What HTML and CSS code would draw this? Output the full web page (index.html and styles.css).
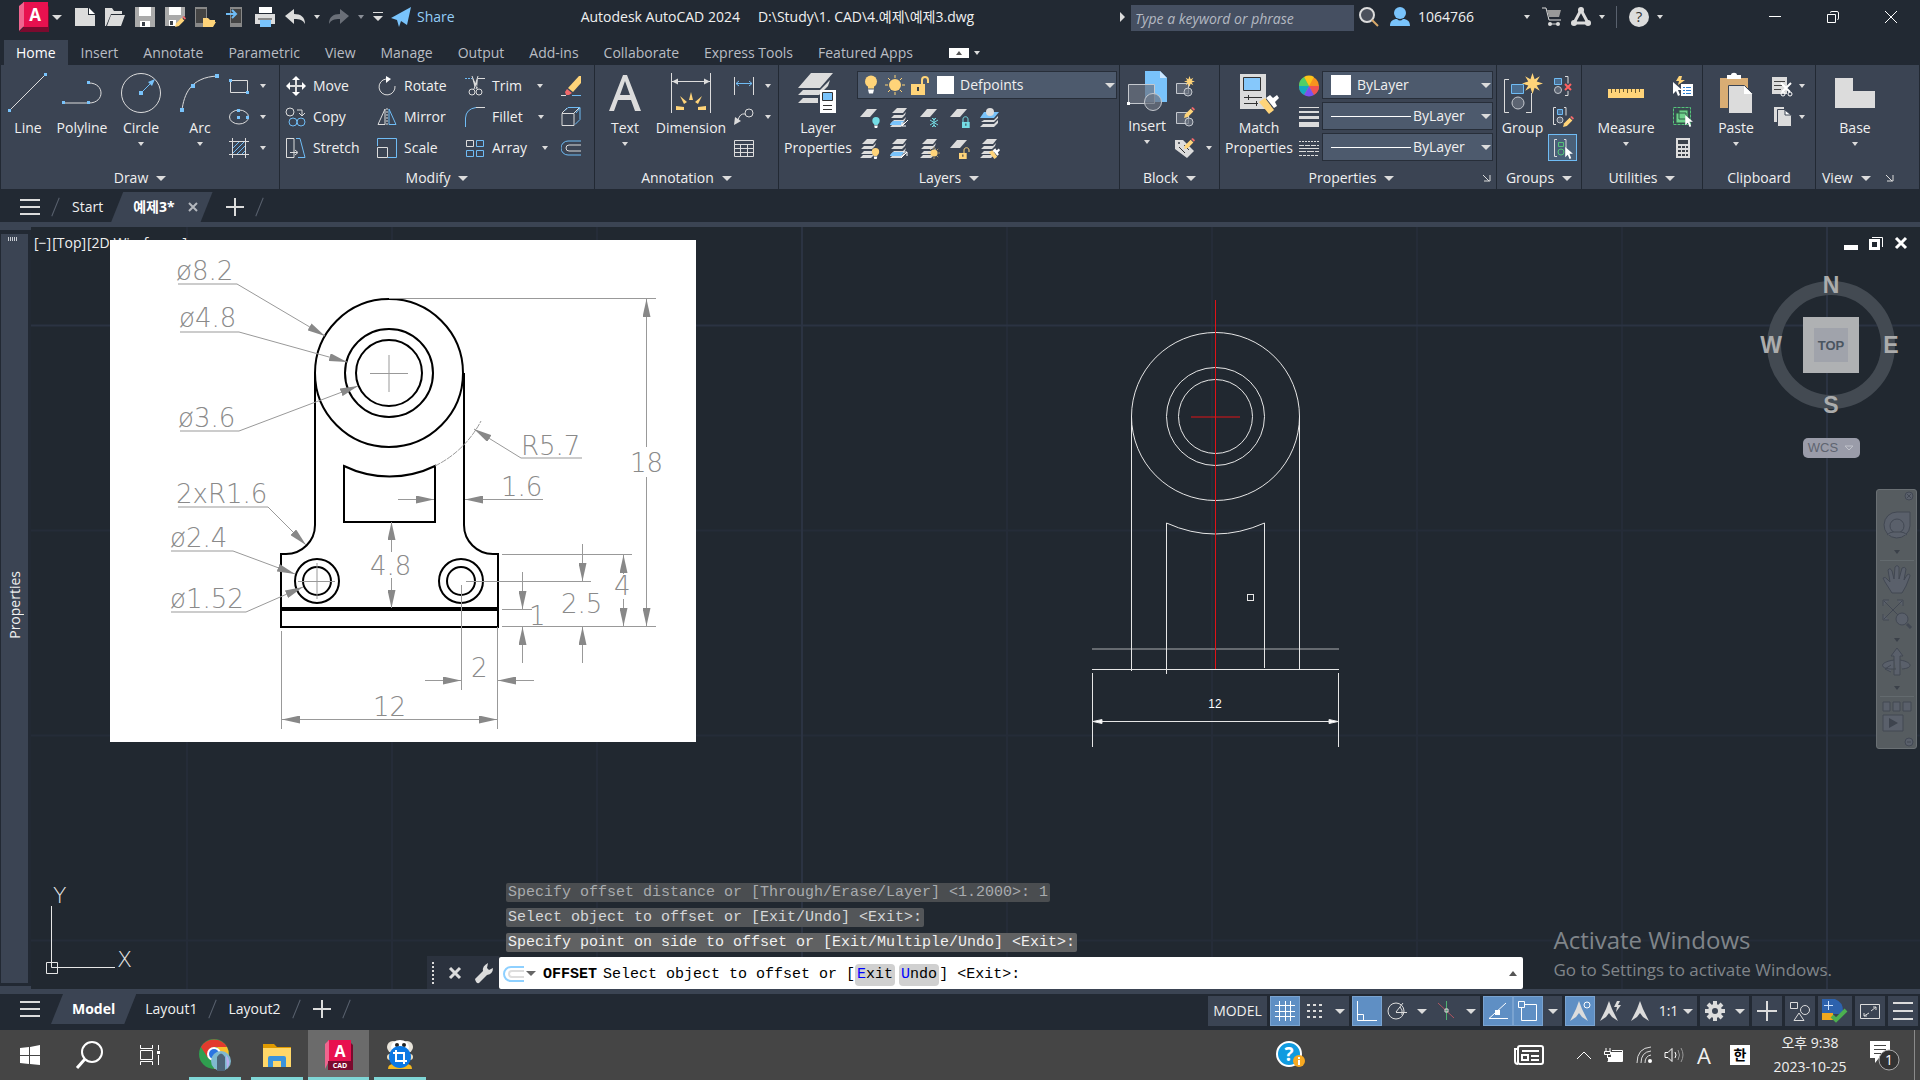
FILE: index.html
```html
<!DOCTYPE html>
<html lang="en">
<head>
    <meta charset="UTF-8">
    <meta name="viewport" content="width=device-width, initial-scale=1.0">
    <title>Autodesk AutoCAD 2024</title>
    <link rel="stylesheet" href="styles.css">
</head>
<body>
    <!-- shared icon parts -->
    <svg class="defs" aria-hidden="true">
        <symbol id="sheet" viewBox="0 0 20 20"><path class="f" d="M7 1h10l-7 8H0z"/></symbol>
        <symbol id="stack" viewBox="0 0 20 20">
            <path class="f" d="M7 0h10l-4 5H2z"/>
            <path class="f" d="M1 10l3-3h9l3-3-1 3-3 3zM1 15l3-3h9l3-3-1 3-3 3zM0 19l3-3h9l3-3-1 3-3 3z"/>
        </symbol>
        <symbol id="pencil" viewBox="0 0 20 20"><path class="f-yellow" d="M0 20l2-7L12 3l5 5L7 18z"/><path class="f-red" d="M13 2l3-2 4 4-2 3z"/></symbol>
        <symbol id="brush" viewBox="0 0 20 20"><path class="f-yellow" d="M0 8l6-4 9 12-5 4z"/><path class="f-white" d="M7 4l4-3 3 3 4-3 2 3-4 4 2 4-3 2z"/></symbol>
        <symbol id="bulb" viewBox="0 0 12 18"><circle cx="6" cy="6" r="6"/><path d="M3 10h6v3H3z"/><path class="f-white" d="M3 14h6l-1 4H4z"/></symbol>
        <symbol id="sun" viewBox="0 0 20 20"><circle class="f-yellow" cx="10" cy="10" r="6"/><path class="s-yellow" d="M10 0v3M10 17v3M0 10h3M17 10h3M3 3l2 2M15 15l2 2M3 17l2-2M15 5l2-2"/></symbol>
        <symbol id="lock" viewBox="0 0 20 20"><path d="M0 9h14v11H0z"/><path class="dark" d="M6 12h2v4H6z"/></symbol>
        <symbol id="pointer" viewBox="0 0 10 14"><path class="f-white" d="M0 0v12l3-3 2 5 2-1-2-5h4z"/></symbol>
        <symbol id="burst" viewBox="0 0 20 20"><path class="f-yellow" d="M10 0l2 6 5-3-3 5 6 2-6 2 3 5-5-3-2 6-2-6-5 3 3-5-6-2 6-2-3-5 5 3z"/></symbol>
        <symbol id="compass" viewBox="0 0 20 20"><path class="f" d="M10 0l3 8 6 12-6-4-3-4-3 4-6 4 6-12z"/></symbol>
        <symbol id="offset" viewBox="0 0 20 20"><path class="s-blue" d="M20 3H7a7 7 0 0 0 0 14h13"/><path class="s" d="M20 7H8a3 3 0 0 0 0 6h12"/></symbol>
    </svg>

    <header class="titlebar">
        <div class="quick">
            <button class="logo" aria-label="Application menu"><svg width="30" height="30" viewBox="0 0 30 30"><path fill="#e8114f" d="M4 0h25v25H4z"/><path fill="#f0658f" d="M0 4l5-4v24l-5 5z"/><path fill="#7b0a2e" d="M5 25h24V4l1 1v25H0z"/><text class="logo-a" x="16" y="19">A</text></svg></button>
            <i class="caret wide"></i>
            <button class="qbtn first" aria-label="New"><svg class="ico"><path class="f" d="M0 1h13v7h7v11H0z"/><path class="f-white" d="M14 1l6 6h-6z"/></svg></button>
            <button class="qbtn" aria-label="Open"><svg class="ico"><path class="f" d="M0 1h7l2 3h8v3H6L1 19H0zM6 8h14l-4 11H2z"/></svg></button>
            <button class="qbtn" aria-label="Save"><svg class="ico"><path fill="#aaa" d="M0 0h20v20H0z"/><path class="f-white" d="M4 0h12v9H4zM5 14h10v6H5z"/><path class="dark" d="M7 15h3v4H7z"/></svg></button>
            <button class="qbtn" aria-label="Save as"><svg class="ico"><path fill="#aaa" d="M0 0h20v9l-9 10H0z"/><path class="f-white" d="M4 0h12v8H4zM4 13h7v6H4z"/><path class="dark" d="M5 14h3v4H5z"/><use href="#pencil" x="10" y="9" width="11" height="11"/></svg></button>
            <button class="qbtn" aria-label="Open from web"><svg class="ico"><path fill="#888" d="M0 0h12v20H0z"/><path fill="#444" d="M1 2h10v14H1z"/><path class="f-yellow" d="M8 11h5l2 2h5v2h-8l-2 5H8zM12 15h9l-3 5h-8z"/></svg></button>
            <button class="qbtn" aria-label="Save to web"><svg class="ico"><path fill="#888" d="M5 0h12v20H5z"/><path fill="#444" d="M6 2h10v14H6z"/><path class="s-blue thick" d="M1 7h9M7 3l4 4-4 4"/></svg></button>
            <button class="qbtn" aria-label="Plot"><svg class="ico"><path class="f-white" d="M4 0h13v6H4z"/><path class="f" d="M0 7h20v10H0z"/><path fill="#888" d="M3 11h14v2H3z"/><path class="f-blue" d="M5 13h11v7H5z"/></svg></button>
            <button class="qbtn" aria-label="Undo"><svg class="ico"><path class="f" d="M0 9l9-7v5c7 0 11 3 11 10-2-4-5-5-11-5v5z"/></svg></button>
            <i class="caret"></i>
            <button class="qbtn" aria-label="Redo"><svg class="ico"><path fill="#6a6f78" d="M20 9l-9-7v5C4 7 0 10 0 17c2-4 5-5 11-5v5z"/></svg></button>
            <i class="caret dim"></i>
            <button class="qbtn narrow" aria-label="Customize"><svg width="10" height="10"><path class="f" d="M0 0h10v1H0zM0 4h10L5 9z"/></svg></button>
            <button class="share"><svg class="ico"><path class="f-blue" d="M0 11l20-11-4 18-6-4-2 6-2-7zM7 13l10-9-7 10z"/></svg>Share</button>
        </div>
        <div class="doc-title"><span>Autodesk AutoCAD 2024</span><span>D:\Study\1. CAD\4.예제\예제3.dwg</span></div>
        <div class="account">
            <i class="caret right"></i>
            <input class="search" type="text" placeholder="Type a keyword or phrase" aria-label="Search">
            <button class="abtn" aria-label="Search help"><svg class="ico"><circle cx="8" cy="8" r="7" fill="#4b505b" stroke="#dcdcdc" stroke-width="2"/><path stroke="#d9a96b" stroke-width="2" d="M13 13l6 6"/></svg></button>
            <button class="user"><svg class="ico"><circle class="f-blue" cx="10" cy="6" r="6"/><path class="f-blue" d="M0 19c0-5 3-7 7-7 2 2 4 2 6 0 4 0 7 2 7 7z"/></svg>1064766<i class="caret"></i></button>
            <button class="abtn" aria-label="Store"><svg class="ico"><path class="s" d="M0 1h4l3 12h12M7 17h10"/><path fill="#999" d="M5 3h14l-2 7H7z"/><circle class="f" cx="8" cy="17" r="2"/><circle class="f" cx="16" cy="17" r="2"/></svg></button>
            <button class="abtn" aria-label="Autodesk app store"><svg class="ico"><path class="s fat" d="M10 3L3 16h14z"/><circle class="f" cx="10" cy="3" r="3"/><circle class="f" cx="3" cy="16" r="3"/><circle class="f" cx="17" cy="16" r="3"/></svg></button>
            <i class="caret"></i>
            <i class="vsep"></i>
            <button class="abtn" aria-label="Help"><svg class="ico"><circle class="f" cx="10" cy="10" r="10"/><text class="help-q" x="10" y="15">?</text></svg></button>
            <i class="caret"></i>
            <div class="winbtns">
                <button aria-label="Minimize"><svg width="14" height="14"><path class="s-white" d="M1 6.500h12"/></svg></button>
                <button aria-label="Restore"><svg width="14" height="14"><path class="s-white" d="M1.500 4.500h8v8h-8zM4 2.500q1-1 2-1h5q1.500 0 1.500 1.500v5q0 1-1 2"/></svg></button>
                <button aria-label="Close"><svg width="14" height="14"><path class="s-white" d="M1 1l12 12M13 1L1 13"/></svg></button>
            </div>
        </div>
    </header>

    <nav class="menu">
        <a class="active" href="#">Home</a>
        <a href="#">Insert</a>
        <a href="#">Annotate</a>
        <a href="#">Parametric</a>
        <a href="#">View</a>
        <a href="#">Manage</a>
        <a href="#">Output</a>
        <a href="#">Add-ins</a>
        <a href="#">Collaborate</a>
        <a href="#">Express Tools</a>
        <a href="#">Featured Apps</a>
        <button class="collapse" aria-label="Minimize ribbon"><svg width="20" height="10"><path class="f-white" d="M0 0h20v10H0z"/><path fill="#555" d="M7 7h6l-3-4z"/></svg><i class="caret"></i></button>
    </nav>

    <main class="ribbon">
        <section class="panel draw">
            <div class="tools">
                <button class="big"><svg class="bico"><path class="s" d="M1 38L38 1"/><path class="f-blue" d="M0 36h3v3H0zM36 0h3v3h-3z"/></svg>Line</button>
                <button class="big"><svg class="bico"><path class="s" d="M1 30h26M27 10c16 0 16 20 0 20"/><path class="f-blue" d="M0 28h3v3H0zM25 28h3v3h-3zM25 8h3v3h-3z"/></svg>Polyline</button>
                <button class="big"><svg class="bico"><circle class="s" cx="20" cy="20" r="19.500"/><path class="s-blue" d="M20 20L32 8"/><path class="f-blue" d="M18 18h4v4h-4zM34 6l-7 3 4 4z"/></svg>Circle<i class="caret"></i></button>
                <button class="big"><svg class="bico"><path class="s" d="M2 37C4 22 10 4 38 3"/><path class="f-blue" d="M0 35h4v4H0zM11 11h4v4h-4zM35 1h4v4h-4z"/></svg>Arc<i class="caret"></i></button>
                <div class="rows">
                    <button aria-label="Rectangle"><svg class="ico"><path class="s" d="M1.500 4.500h17v12h-17z"/><path class="f-blue" d="M0 3h3v3H0zM17 15h3v3h-3z"/></svg><i class="caret"></i></button>
                    <button aria-label="Ellipse"><svg class="ico"><ellipse class="s" cx="10" cy="10" rx="9.500" ry="7"/><path class="f-blue" d="M8 2h3v3H8zM8 9h3v3H8zM17 9h3v3h-3z"/></svg><i class="caret"></i></button>
                    <button aria-label="Hatch"><svg class="ico"><path class="s" d="M3.500 0v20M16.500 0v20M0 3.500h20M0 16.500h20"/><path class="s-blue" d="M4 10l6-6M4 15L15 4M8 16l8-8M13 16l3-3"/></svg><i class="caret"></i></button>
                </div>
            </div>
            <button class="panel-title">Draw<i class="caret wide"></i></button>
        </section>

        <section class="panel modify">
            <div class="tools">
                <div class="rows">
                    <button><svg class="ico"><path class="s thick" d="M10 2v16M2 10h16"/><path class="f-white" d="M10 0l4 4H6zM10 20l4-4H6zM0 10l4-4v8zM20 10l-4-4v8z"/></svg>Move</button>
                    <button><svg class="ico"><circle class="s" cx="4" cy="5" r="4"/><circle class="s-blue" cx="7" cy="15" r="4"/><circle class="s-blue" cx="15" cy="15" r="4"/><path class="s" d="M11 3h5v5M13 6l3 3 3-3"/></svg>Copy</button>
                    <button><svg class="ico"><path class="s" d="M.500.500H8v19H.500zM4 14.500h7M9 12l3 2.500L9 17"/><path class="s-blue" d="M10 .500h4l5 19h-7"/></svg>Stretch</button>
                </div>
                <div class="rows mid">
                    <button><svg class="ico"><path class="s" d="M9 3a8 8 0 1 0 9 7"/><path class="f-white" d="M9 0l5 3-5 4z"/></svg>Rotate</button>
                    <button><svg class="ico"><path class="s" d="M8 2v15.500H1z"/><path class="s-blue" d="M12 2v15.500h7z"/><path class="s" d="M10 1v18" stroke-dasharray="2 1"/></svg>Mirror</button>
                    <button><svg class="ico"><path class="s-blue" d="M.500 8V.500h19v19H11"/><path class="s" d="M.500 9.500h10v10H.500z"/></svg>Scale</button>
                </div>
                <div class="rows spread">
                    <button><svg class="ico"><path class="s-blue" d="M0 2.500h7" stroke-dasharray="2 1"/><path class="s" d="M13 2.500h7M7 0l5 13M13 0L9 13"/><path class="f" d="M7 1l6 11-3 1zM13 1L9 12l3 1z"/><circle class="s" cx="7" cy="16" r="3"/><circle class="s" cx="14" cy="16" r="3"/></svg>Trim<i class="caret"></i></button>
                    <button><svg class="ico"><path class="s-blue" d="M.500 20v-9Q1 2 11 .500"/><path class="s" d="M11 .500h9"/></svg>Fillet<i class="caret"></i></button>
                    <button><svg class="ico"><path class="s" d="M1.500 2.500h7v6h-7z"/><path class="s-blue" d="M11.500 2.500h7v6h-7zM1.500 12.500h7v6h-7zM11.500 12.500h7v6h-7z"/></svg>Array<i class="caret"></i></button>
                </div>
                <div class="rows">
                    <button aria-label="Erase"><svg class="ico"><path class="s" d="M0 19.500h5"/><path class="s-blue" d="M11 19.500h9"/><path class="f-yellow" d="M7 12L18 0h2v7l-8 9z"/><path class="f-red" d="M6 13l5 4-3 2H5l-1-3z"/></svg></button>
                    <button aria-label="Explode"><svg class="ico"><path class="s" d="M1 6.500h12v12H1zM1 6l5-5M13 6l5-5"/><path class="s-blue" d="M4 3.500L7 .500h12v12l-5 5M15 6l4-5"/></svg></button>
                    <button aria-label="Offset"><svg class="ico"><use href="#offset"/></svg></button>
                </div>
            </div>
            <button class="panel-title">Modify<i class="caret wide"></i></button>
        </section>

        <section class="panel annotation">
            <div class="tools">
                <button class="big"><svg class="bico"><path class="f" d="M18 2h4l14 36h-6l-4-11H13L9 38H4zM20 8l-5 14h10z"/></svg>Text<i class="caret"></i></button>
                <button class="big"><svg class="bico"><path class="s" d="M.500 0v40M39.500 0v40M1 8.500h38"/><path class="f" d="M1 8.500l6-3v6zM39 8.500l-6-3v6z"/><path class="f-yellow" d="M20 19l2 8h-4zM9 23l7 6-3 2zM31 23l-7 6 3 2zM5 33l8 1v3H5zM35 33l-8 1v3h8z"/></svg>Dimension</button>
                <div class="rows">
                    <button aria-label="Linear"><svg class="ico"><path class="s" d="M.500 1v18M19.500 1v18"/><path class="s-blue" d="M2 7.500h16M5 5L2 7.500 5 10M15 5l3 2.500-3 2.500"/></svg><i class="caret"></i></button>
                    <button aria-label="Leader"><svg class="ico"><circle class="s" cx="15" cy="6" r="4"/><path class="s" d="M11 7Q6 6 4 13"/><path class="f" d="M0 18l1-8 6 4z"/></svg><i class="caret"></i></button>
                    <button aria-label="Table"><svg class="ico"><path class="s" d="M.500 2.500h19v16H.500zM0 6.500h20M0 10.500h20M0 14.500h20M6.500 7v12M13.500 7v12"/></svg></button>
                </div>
            </div>
            <button class="panel-title">Annotation<i class="caret wide"></i></button>
        </section>

        <section class="panel layers">
            <div class="tools">
                <button class="big two"><svg class="bico"><path class="f" d="M13 0h22L22 15H0zM0 22l5-5h17L32 7l-2 6-9 9zM0 30l5-5h15v5z"/><path class="f-white" d="M22 17h16v23H22z"/><path class="f-blue" stroke="#333" d="M24.500 19.500h10v8h-10z"/><path stroke="#333" d="M25 32.500h9M25 36.500h9"/></svg>Layer<br>Properties</button>
                <div class="stack">
                    <div class="combo wide">
                        <svg width="14" height="20" class="f-yellow"><use href="#bulb" width="12" height="19"/></svg>
                        <svg class="ico"><use href="#sun"/></svg>
                        <svg class="ico f-yellow"><use href="#lock"/><path class="s-yellow thick" d="M11 9V5c0-4 6-4 6 0v3"/></svg>
                        <i class="swatch"></i>
                        <select aria-label="Layer"><option>Defpoints</option></select>
                        <i class="caret wide"></i>
                    </div>
                    <div class="icons">
                        <button aria-label="Off"><svg class="ico"><use href="#sheet"/><svg class="f-cyan"><use href="#bulb" x="12" y="9" width="8" height="11"/></svg></svg></button>
                        <button aria-label="Isolate"><svg class="ico"><use href="#stack"/><path class="f-blue" d="M0 16l3-3h11l-3 4H0z"/><path class="s-white" d="M18 12l-6 6v-4m0 4h4"/></svg></button>
                        <button aria-label="Freeze"><svg class="ico"><use href="#sheet"/><path class="s-cyan" d="M14 10v9M10 12l8 5M18 12l-8 5M12 10l2 2 2-2M12 19l2-2 2 2"/></svg></button>
                        <button aria-label="Lock"><svg class="ico"><use href="#sheet"/><svg class="f-cyan"><use href="#lock" x="11" y="9" width="13" height="11"/></svg><path class="s-cyan" d="M13 14v-3c0-3 5-3 5 0v3"/></svg></button>
                        <button aria-label="Make current"><svg class="ico"><path class="f-blue" d="M4 4h15l-5 6H0z"/><circle class="f" cx="10" cy="4" r="4"/><path class="f" d="M1 14l3-2h10l4-4v2l-4 4zM0 19l3-3h11l4-4v3l-4 4z"/></svg></button>
                    </div>
                    <div class="icons">
                        <button aria-label="On"><svg class="ico"><use href="#stack"/><svg class="f-yellow"><use href="#bulb" x="11" y="9" width="9" height="11"/></svg></svg></button>
                        <button aria-label="Unisolate"><svg class="ico"><use href="#stack"/><path class="f-blue" d="M0 16l3-3h11l-3 4H0z"/><path class="s-white" d="M11 19l6-6v4m0-4h-4"/></svg></button>
                        <button aria-label="Thaw"><svg class="ico"><use href="#stack"/><use href="#sun" x="8" y="8" width="12" height="12"/></svg></button>
                        <button aria-label="Unlock"><svg class="ico"><use href="#sheet"/><svg class="f-yellow"><use href="#lock" x="8" y="9" width="13" height="11"/></svg><path class="s-yellow" d="M14 14v-3c0-3 5-3 5 0v2"/></svg></button>
                        <button aria-label="Match layer"><svg class="ico"><use href="#stack"/><use href="#brush" x="9" y="9" width="11" height="11"/></svg></button>
                    </div>
                </div>
            </div>
            <button class="panel-title">Layers<i class="caret wide"></i></button>
        </section>

        <section class="panel block">
            <div class="tools">
                <button class="big"><svg class="bico"><path class="f-blue" d="M18 0h15l7 7v24H18z"/><path fill="#cbe6ff" d="M33 0v7h7z"/><path class="s-shade" d="M1.500 13.500h26v19h-26z"/><circle class="s-shade" cx="26" cy="31" r="8.500"/><path class="f-white" d="M0 31h3v3H0z"/></svg>Insert<i class="caret"></i></button>
                <div class="rows">
                    <button aria-label="Create block"><svg class="ico"><path class="s-shade" d="M1.500 7.500h12v10h-12z"/><circle class="s-shade" cx="13" cy="16" r="4"/><use href="#burst" x="9" y="0" width="11" height="11"/></svg></button>
                    <button aria-label="Edit block"><svg class="ico"><path class="s-shade" d="M1.500 5.500h12v11h-12z"/><circle class="s-shade" cx="14" cy="15" r="4"/><use href="#pencil" x="9" y="0" width="11" height="11"/></svg></button>
                    <button aria-label="Edit attributes"><svg class="ico"><path class="f" d="M0 2h8l11 11-7 7L0 11z"/><circle class="dark" cx="4" cy="5" r="1"/><path stroke="#333" d="M4 9l6 6M9 7l5 5"/><use href="#pencil" x="9" y="0" width="11" height="11"/></svg><i class="caret"></i></button>
                </div>
            </div>
            <button class="panel-title">Block<i class="caret wide"></i></button>
        </section>

        <section class="panel properties">
            <div class="tools">
                <button class="big two"><svg class="bico"><path class="f" d="M1 1h26v35H1z"/><path fill="#86c8fb" stroke="#333" d="M4.500 4.500h17v13h-17z"/><path stroke="#333" d="M5 24.500h18M5 30.500h14M9.500 22v5M17.500 28v5"/><use href="#brush" x="20" y="21" width="20" height="20"/></svg>Match<br>Properties</button>
                <div class="rows plain">
                    <button aria-label="Color"><svg class="ico"><circle cx="10" cy="10" r="10" fill="#f7931e"/><path fill="#fcc419" d="M10 10L5 1a10 10 0 0 1 10 0z"/><path fill="#f05252" d="M10 10h10a10 10 0 0 1-5 9z"/><path fill="#7950f2" d="M10 10l5 9a10 10 0 0 1-10 0z"/><path fill="#15aabf" d="M10 10l-5 9a10 10 0 0 1-5-9z"/><path fill="#51cf66" d="M10 10H0a10 10 0 0 1 5-9z"/></svg></button>
                    <button aria-label="Lineweight"><svg class="ico"><path class="f" d="M0 0h20v1H0zM0 4h20v2H0zM0 9h20v3H0zM0 15h20v5H0z"/></svg></button>
                    <button aria-label="Linetype"><svg class="ico"><path class="s" stroke-dasharray="2 1" d="M0 3.500h20"/><path class="s" stroke-dasharray="5 1" d="M0 7.500h20"/><path class="s" d="M0 10.500h20"/><path class="s" stroke-dasharray="7 1" d="M0 13.500h20"/><path class="s" stroke-dasharray="3 1" d="M0 17.500h20"/></svg></button>
                </div>
                <div class="combos">
                    <div class="combo"><i class="swatch large"></i><select aria-label="Object color"><option>ByLayer</option></select><i class="caret wide"></i></div>
                    <div class="combo"><i class="rule"></i><select aria-label="Lineweight"><option>ByLayer</option></select><i class="caret wide"></i></div>
                    <div class="combo"><i class="rule"></i><select aria-label="Linetype"><option>ByLayer</option></select><i class="caret wide"></i></div>
                </div>
            </div>
            <div class="title-row">
                <button class="panel-title">Properties<i class="caret wide"></i></button>
                <button class="launcher" aria-label="Properties palette"><svg width="8" height="8"><path class="s" d="M0 1l6 6M7 1v6H1"/></svg></button>
            </div>
        </section>

        <section class="panel groups">
            <div class="tools">
                <button class="big"><svg class="bico"><path class="s" d="M6 6.500H1.500v33H6M23 39.500h5.500V20"/><path class="s-shadeblue" d="M8.500 11.500h12v9h-12z"/><circle class="s-shade" cx="15" cy="30" r="6"/><use href="#burst" x="19" y="0" width="21" height="21"/></svg>Group</button>
                <div class="rows">
                    <button aria-label="Ungroup"><svg class="ico"><path class="s-shadeblue" d="M1.500 2.500h7v6h-7z"/><circle class="s-shade" cx="5" cy="14" r="3.500"/><path class="s" d="M12 .500h3v7M12 19.500h3V15"/><path stroke="#ff6161" stroke-width="2" d="M12 8l6 6M18 8l-6 6"/></svg></button>
                    <button aria-label="Group edit"><svg class="ico"><path class="s" d="M3 .500H.500v17H3M11 .500h2v8"/><path class="s-shadeblue" d="M4.500 2.500h5v5h-5z"/><circle class="s-shade" cx="7" cy="13" r="3"/><use href="#pencil" x="10" y="9" width="11" height="11"/></svg></button>
                    <button class="on" aria-label="Group selection"><svg class="ico"><path class="s" d="M4 1.500H1.500v17H4M11 1.500h2v9"/><path class="s-green" d="M5.500 4.500h5v4h-5z"/><circle class="s-green" cx="8" cy="14" r="3"/><use href="#pointer" x="12" y="9" width="9" height="12"/></svg></button>
                </div>
            </div>
            <button class="panel-title">Groups<i class="caret wide"></i></button>
        </section>

        <section class="panel utilities">
            <div class="tools">
                <button class="big"><svg class="bico"><path class="f-yellow" d="M2 16h36v9H2z"/><path stroke="#6a5a30" d="M5.500 16v4M9.500 16v3M13.500 16v4M17.500 16v3M21.500 16v4M25.500 16v3M29.500 16v4M33.500 16v3"/></svg>Measure<i class="caret"></i></button>
                <div class="rows">
                    <button aria-label="Quick select"><svg class="ico"><use href="#pointer" x="0" y="6" width="10" height="14"/><path class="f-yellow" d="M9 0H6L3 5h3l-1 4 7-5H8z"/><path class="f-white" d="M8 8h12v12H8z"/><path stroke="#2d7fd0" stroke-width="1" d="M10 11.500h2M13 11.500h5M10 14.500h2M13 14.500h5M10 17.500h2M13 17.500h5"/></svg></button>
                    <button aria-label="Select all"><svg class="ico"><path class="s-green" stroke-dasharray="3 1" d="M.500.500h17v17H.500z"/><path class="f-green" d="M3 6h10v10H3zM6 3h9v9H6z"/><use href="#pointer" x="12" y="8" width="9" height="12"/></svg></button>
                    <button aria-label="Calculator"><svg class="ico"><path class="f" d="M3 0h14v20H3z"/><path class="dark" d="M5 2h10v4H5zM5 8h3v2H5zM9 8h3v2H9zM13 8h2v2h-2zM5 12h3v2H5zM9 12h3v2H9zM13 12h2v2h-2zM5 16h3v2H5zM9 16h3v2H9zM13 16h2v2h-2z"/></svg></button>
                </div>
            </div>
            <button class="panel-title">Utilities<i class="caret wide"></i></button>
        </section>

        <section class="panel clipboard">
            <div class="tools">
                <button class="big"><svg class="bico"><path fill="#d9ad74" d="M4 5h28v30H4z"/><path class="f-white" d="M11 2h4c0-3 6-3 6 0h4v4H11z"/><path fill="#dcdcdc" stroke="#3b4453" d="M12.500 12.500h16l8 8v20h-24z"/><path class="f-white" d="M28 13l8 8h-8z"/></svg>Paste<i class="caret"></i></button>
                <div class="rows">
                    <button aria-label="Cut"><svg class="ico"><path class="f" d="M0 1h15v17H0z"/><path stroke="#444" d="M2 5.500h11M2 9.500h8M2 13.500h7"/><path class="s-white thick" d="M9 7l9 9M19 7l-9 9"/><circle class="s-white" cx="11" cy="18" r="2"/><circle class="s-white" cx="18" cy="18" r="2"/></svg><i class="caret"></i></button>
                    <button aria-label="Copy"><svg class="ico"><path class="f" d="M2 0h10v15H2z"/><path fill="#dcdcdc" stroke="#3b4453" d="M5.500 2.500h8l6 6v11h-14z"/><path stroke="#3b4453" fill="#fff" d="M13 3v5h6z"/></svg><i class="caret"></i></button>
                </div>
            </div>
            <div class="panel-title">Clipboard</div>
        </section>

        <section class="panel view">
            <div class="tools">
                <button class="big"><svg class="bico"><path class="f" d="M0 5h18v13h22v17H0z"/></svg>Base<i class="caret"></i></button>
            </div>
            <div class="title-row">
                <button class="panel-title">View<i class="caret wide"></i></button>
                <button class="launcher" aria-label="View settings"><svg width="8" height="8"><path class="s" d="M0 1l6 6M7 1v6H1"/></svg></button>
            </div>
        </section>
    </main>

    <nav class="filetabs">
        <button class="burger" aria-label="Drawings"><svg width="20" height="16"><path class="f" d="M0 0h20v2H0zM0 7h20v2H0zM0 14h20v2H0z"/></svg></button>
        <i class="slash"></i>
        <a href="#">Start</a>
        <a class="tab active" href="#">예제3*<svg width="10" height="10"><path d="M1 1l8 8M9 1L1 9" stroke="#b4b8be" stroke-width="2"/></svg></a>
        <button class="plus" aria-label="New drawing"><svg width="18" height="18"><path class="f" d="M8 0h2v8h8v2h-8v8H8v-8H0V8h8z"/></svg></button>
        <i class="slash"></i>
    </nav>

    <div class="workspace">
        <aside class="palette"><div class="palette-bar"><i class="grip"></i><span>Properties</span></div></aside>
        <div class="canvas">
            <svg class="model" viewBox="31 227 1889 762" preserveAspectRatio="xMinYMin slice">
                <path class="grid" d="M187 227v762M392 227v762M597 227v762M1007 227v762M1212 227v762M1417 227v762M1622 227v762M31 530.500h1889M31 735.500h1889M31 940.500h1889"/>
                <path class="grid major" d="M802 227v762M1827 227v762M31 325.500h1889"/>
                <g class="plan">
                    <circle cx="1215.500" cy="416.500" r="84"/>
                    <circle cx="1215.500" cy="416.500" r="49"/>
                    <circle cx="1215.500" cy="416.500" r="37"/>
                    <path d="M1131.500 416v255M1299.500 416v253M1166.500 523v151M1264.500 523v145"/>
                    <path d="M1166.500 523Q1215 545 1264.500 523"/>
                    <path d="M1092 649h247" opacity=".7"/>
                    <path d="M1092 669.500h247"/>
                    <path d="M1092.500 673v74M1338.500 673v74M1093 721.500h245"/>
                    <path class="solid" d="M1093 721.500l9-2v4zM1338 721.500l-9-2v4z"/>
                    <path class="center" d="M1215.500 300v369M1191 417h49"/>
                    <rect x="1247.500" y="594.500" width="6" height="6"/>
                </g>
                <text class="dim" x="1215" y="708">12</text>
            </svg>

            <div class="vp-label"><button>[−]</button><button>[Top]</button><button>[2D Wireframe]</button></div>

            <!-- exercise sheet pinned over the viewport -->
            <svg class="sheet" width="586" height="502" viewBox="110 240 586 502">
                <defs>
                    <marker id="arrow" markerUnits="userSpaceOnUse" markerWidth="18" markerHeight="8" refX="18" refY="4" orient="auto-start-reverse"><path fill="#888" d="M0 0l18 4-18 4z"/></marker>
                </defs>
                <rect x="110" y="240" width="586" height="502" fill="#fff"/>
                <g class="part">
                    <circle cx="389" cy="373" r="74"/>
                    <circle cx="389" cy="373" r="44"/>
                    <circle cx="389" cy="373" r="33"/>
                    <path d="M315 373v152a29 29 0 0 1-29 29h-5v73h217v-73h-5a29 29 0 0 1-29-29V373"/>
                    <path d="M344 466v56h91v-56A104 104 0 0 1 344 466z"/>
                    <path class="heavy" d="M281 609h217"/>
                    <circle cx="317" cy="581" r="22"/>
                    <circle cx="317" cy="581" r="14"/>
                    <circle cx="461" cy="581" r="22"/>
                    <circle cx="461" cy="581" r="14"/>
                </g>
                <g class="lead">
                    <path d="M370 373.500h38M389 355v37M298 581.500h37M317 563v36M466 581.500h125"/>
                    <path d="M435 466A104 104 0 0 0 481 421" stroke-dasharray="6 1"/>
                    <path d="M389 298.500h267M502 626.500h154M502 554.500h130M502 609.500h30M281.500 631v98M497.500 627v102M461.500 585v105"/>
                    <g marker-end="url(#arrow)">
                        <path d="M178 284h59l88 52"/>
                        <path d="M180 332h59l108 30"/>
                        <path d="M180 431h59l119-45"/>
                        <path d="M178 507h90l38 38"/>
                        <path d="M171 551h62l62 23"/>
                        <path d="M171 612h75l57-25"/>
                        <path d="M582 458h-61l-47-29"/>
                        <path d="M543 499.500h-78"/>
                        <path d="M398 499.500h36"/>
                        <path d="M391.500 552v-30"/>
                        <path d="M391.500 578v30"/>
                        <path d="M425 680.500h36"/>
                        <path d="M534 680.500h-36"/>
                        <path d="M522.500 572v37"/>
                        <path d="M522.500 663v-36"/>
                        <path d="M582.500 544v37"/>
                        <path d="M582.500 663v-36"/>
                        <path d="M623.500 574v-19"/>
                        <path d="M623.500 599v27"/>
                        <path d="M646.500 447V299"/>
                        <path d="M646.500 477v149"/>
                        <path d="M389 719.500h108"/>
                        <path d="M389 719.500H282"/>
                    </g>
                </g>
                <g class="note">
                    <text x="176" y="280">ø8.2</text>
                    <text x="179" y="327">ø4.8</text>
                    <text x="178" y="427">ø3.6</text>
                    <text x="176" y="503">2xR1.6</text>
                    <text x="170" y="547">ø2.4</text>
                    <text x="170" y="608">ø1.52</text>
                    <text x="521" y="455">R5.7</text>
                    <text x="501" y="496">1.6</text>
                    <text x="370" y="575">4.8</text>
                    <text x="373" y="716">12</text>
                    <text x="471" y="677">2</text>
                    <text x="529" y="625">1</text>
                    <text x="561" y="613">2.5</text>
                    <text x="614" y="595">4</text>
                    <text x="630" y="472">18</text>
                </g>
            </svg>

            <div class="mdi">
                <button aria-label="Minimize drawing"><svg width="14" height="14"><path class="f-white" d="M0 9h14v5H0z"/></svg></button>
                <button aria-label="Restore drawing"><svg width="14" height="14"><path fill="none" stroke="#fff" stroke-width="3" d="M1.500 4.500h8v8h-8z"/><path class="s-white" d="M3 1.500h10.500V11"/></svg></button>
                <button aria-label="Close drawing"><svg width="14" height="14"><path stroke="#fff" stroke-width="3" d="M2 2l10 10M12 2L2 12"/></svg></button>
            </div>

            <div class="viewcube">
                <svg width="144" height="144">
                    <circle cx="72" cy="72" r="57" fill="none" stroke="#434a52" stroke-width="14"/>
                    <rect x="44" y="44" width="56" height="56" fill="#afb1b3"/>
                    <rect x="55" y="55" width="34" height="34" fill="#a0a3ab"/>
                    <text class="face" x="72" y="77">TOP</text>
                    <text x="72" y="20">N</text><text x="72" y="140">S</text><text x="12" y="80">W</text><text x="132" y="80">E</text>
                </svg>
                <button class="wcs">WCS<svg width="10" height="6"><path fill="none" stroke="#c0c2ca" d="M1 1h8L5 5z"/></svg></button>
            </div>

            <div class="navbar">
                <button class="tiny" aria-label="Close"><svg width="10" height="10"><circle class="n" cx="5" cy="5" r="4"/><path class="n" d="M3 3l4 4M7 3L3 7"/></svg></button>
                <button aria-label="Wheel"><svg width="30" height="30"><path class="n" d="M15 1h13v14A13 13 0 1 1 15 1z"/><circle class="n" cx="15" cy="15" r="7"/><path class="n" d="M5 24q3-3 6-3h8q3 0 6 3"/></svg></button>
                <i class="caret"></i>
                <hr>
                <button aria-label="Pan"><svg width="30" height="30"><path class="n" d="M10 29L3 18l-2-4q2-2 5 2l2 2-2-12q2-3 4 1l2 8 1-12q2-3 4 0v12l3-11q3-2 4 1l-2 11 3-5q3-2 3 1l-4 10-4 7z"/></svg></button>
                <button aria-label="Zoom extents"><svg width="30" height="30"><path class="n" d="M2 2l17 17M20 2L2 20M1 7V1h6M15 1h6v6M1 15v6h6"/><circle class="n" cx="20" cy="20" r="6"/><path class="n" stroke-width="3" d="M25 25l4 4"/></svg></button>
                <i class="caret"></i>
                <button aria-label="Orbit"><svg width="30" height="30"><path class="n" d="M12 28V9H9l6-8 6 8h-3v19zM12 13C-2 15-3 21 8 22h6M18 13c12 2 14 8 2 9M9 18l-6 4 6 3"/></svg></button>
                <i class="caret"></i>
                <hr>
                <button aria-label="ShowMotion"><svg width="30" height="32"><path class="n" d="M1 2h7v9H1zM11 2h7v9h-7zM21 2h8v9h-8zM1 15h20v16H1z"/><path fill="#3e444e" d="M7 18v10l9-5z"/></svg></button>
                <button class="tiny end" aria-label="Options"><svg width="10" height="10"><circle class="n" cx="5" cy="5" r="4"/><path class="n" d="M3 5h4"/></svg></button>
            </div>

            <svg class="ucs" width="96" height="92">
                <path d="M8.500 76V20M11 81.500h61M3.500 76.500h11v11h-11zM8.500 76v5.500h4"/>
                <text x="10" y="17">Y</text><text x="74" y="81">X</text>
            </svg>

            <div class="watermark"><strong>Activate Windows</strong><span>Go to Settings to activate Windows.</span></div>

            <div class="command">
                <ol class="history">
                    <li>Specify offset distance or [Through/Erase/Layer] &lt;1.2000&gt;: 1</li>
                    <li>Select object to offset or [Exit/Undo] &lt;Exit&gt;:</li>
                    <li>Specify point on side to offset or [Exit/Multiple/Undo] &lt;Exit&gt;:</li>
                </ol>
                <div class="cmdline">
                    <div class="handle">
                        <i class="dots"></i>
                        <button aria-label="Close command line"><svg width="12" height="12"><path d="M1 1l10 10M11 1L1 11" stroke="#dcdcdc" stroke-width="3"/></svg></button>
                        <button aria-label="Customize"><svg class="ico"><path class="f" d="M1 16l8-8q-1-5 5-8l-1 5 2 2 4-2q0 6-6 7l-8 8q-3 1-4-4z"/></svg></button>
                    </div>
                    <div class="prompt">
                        <svg class="ico"><path fill="none" stroke="#8ed0ff" stroke-width="2" d="M20 3H7a7 7 0 0 0 0 14h13"/><path fill="none" stroke="#ddd" stroke-width="2" d="M20 7H8a3 3 0 0 0 0 6h12"/></svg>
                        <i class="caret wide grey"></i>
                        <label for="cmd"><b>OFFSET</b>Select object to offset or [<button class="opt"><em>E</em>xit</button><button class="opt"><em>U</em>ndo</button>] &lt;Exit&gt;:</label>
                        <input id="cmd" type="text">
                        <button class="up" aria-label="Expand history"><svg width="8" height="6"><path fill="#555" d="M0 5h8L4 0z"/></svg></button>
                    </div>
                </div>
            </div>
        </div>
    </div>

    <footer class="statusbar">
        <nav class="layouts">
            <button class="burger" aria-label="Layouts"><svg width="20" height="16"><path class="f" d="M0 0h20v2H0zM0 7h20v2H0zM0 14h20v2H0z"/></svg></button>
            <a class="tab active" href="#">Model</a>
            <a href="#">Layout1</a>
            <i class="slash"></i>
            <a href="#">Layout2</a>
            <i class="slash"></i>
            <button class="plus" aria-label="New layout"><svg width="18" height="18"><path class="f" d="M8 0h2v8h8v2h-8v8H8v-8H0V8h8z"/></svg></button>
            <i class="slash"></i>
        </nav>
        <div class="toggles">
            <div><button class="model-btn">MODEL</button></div>
            <div>
                <button class="on" aria-label="Grid"><svg class="ico"><path class="s-white" d="M4.500 0v20M10.500 0v20M15.500 0v20M0 4.500h20M0 10.500h20M0 15.500h20"/></svg></button>
                <button aria-label="Snap"><svg class="ico"><path class="f" d="M2 3h3v2H2zM8 3h3v2H8zM14 3h3v2h-3zM2 9h3v2H2zM8 9h3v2H8zM14 9h3v2h-3zM2 15h3v2H2zM8 15h3v2H8zM14 15h3v2h-3z"/></svg></button>
                <button class="drop" aria-label="Snap settings"><i class="caret wide"></i></button>
            </div>
            <div>
                <button class="on" aria-label="Ortho"><svg class="ico"><path class="s-white" d="M.500 0v19.500H20M.500 13.500h6v6"/></svg></button>
                <button aria-label="Polar"><svg class="ico"><circle class="s" cx="9" cy="10" r="8"/><path class="s" d="M9 11L16 2M9 11.500h11M13 6q3 2 2 8"/></svg></button>
                <button class="drop" aria-label="Polar settings"><i class="caret wide"></i></button>
                <button aria-label="Isodraft"><svg class="ico"><path stroke="#b05560" d="M2 2l16 15"/><path stroke="#4fb070" d="M10.500 0v19"/><path class="s" d="M9 8h3v3H9z"/></svg></button>
                <button class="drop" aria-label="Isodraft settings"><i class="caret wide"></i></button>
            </div>
            <div>
                <button class="on" aria-label="Object snap tracking"><svg class="ico"><path class="s-white" d="M18 2L1 17.500h19"/><path class="f-white" d="M7 9h5v5H7z"/></svg></button>
                <button class="on" aria-label="Object snap"><svg class="ico"><path class="s-white" d="M3.500 6v13.500h15V3.500H7"/><path class="s-white" d="M.500.500h6v6h-6z"/></svg></button>
                <button class="drop" aria-label="Object snap settings"><i class="caret wide"></i></button>
            </div>
            <div>
                <button class="on" aria-label="Annotation visibility"><svg class="ico"><use href="#compass" x="-1"/><circle class="s-white" cx="17" cy="4" r="3"/></svg></button>
                <button aria-label="Auto scale"><svg class="ico"><use href="#compass" x="-1"/><path class="f" d="M17 0l-3 6h3l-1 5 5-7h-3l2-4z"/></svg></button>
                <button aria-label="Annotation scale"><svg class="ico"><use href="#compass"/></svg></button>
                <button class="scale">1:1<i class="caret wide"></i></button>
            </div>
            <div>
                <button aria-label="Workspace"><svg class="ico"><circle cx="10" cy="10" r="5" fill="none" stroke="#dcdcdc" stroke-width="4"/><path stroke="#dcdcdc" stroke-width="4" d="M10 0v4M10 16v4M0 10h4M16 10h4M3 3l3 3M14 14l3 3M3 17l3-3M14 6l3-3"/></svg></button>
                <button class="drop" aria-label="Workspace settings"><i class="caret wide"></i></button>
            </div>
            <div><button aria-label="Annotation monitor"><svg class="ico"><path class="f" d="M9 0h2v9h9v2h-9v9H9v-9H0V9h9z"/></svg></button></div>
            <div><button aria-label="Isolate objects"><svg class="ico"><path class="s" d="M.500 1.500h7v6h-7zM4 19.500h10L9 12z"/><circle class="s" cx="15" cy="9" r="4.500"/></svg></button></div>
            <div><button class="perf" aria-label="Graphics performance"><svg width="26" height="24"><path fill="#2d62ad" d="M0 0h13q8 3 8 12v3H0z"/><path fill="#f0a81e" d="M0 14h11v7H0z"/><path stroke="#cfe4ff" d="M6.500 2v9M2 6.500h9"/><path fill="none" stroke="#4caf50" stroke-width="4" d="M10 17l4 4 10-10"/></svg></button></div>
            <div><button aria-label="Clean screen"><svg class="ico"><path class="s" d="M.500 3.500h19v14H.500z"/><path class="s" d="M11 10l5-4M13 6h3v3M9 12l-5 3M4 12v3h3"/></svg></button></div>
            <div><button aria-label="Customization"><svg class="ico"><path class="f" d="M0 1h20v2H0zM0 9h20v2H0zM0 17h20v2H0z"/></svg></button></div>
        </div>
    </footer>

    <footer class="taskbar">
        <div class="apps">
            <button aria-label="Start"><svg width="20" height="20"><path class="f-white" d="M0 3l9-1v8H0zM10 2l10-2v10H10zM0 11h9v8l-9-1zM10 11h10v9l-10-1z"/></svg></button>
            <button aria-label="Search"><svg width="28" height="28"><circle cx="16" cy="11" r="10" fill="none" stroke="#fff" stroke-width="2"/><path stroke="#fff" stroke-width="3" d="M9 18l-8 9"/></svg></button>
            <button aria-label="Task view"><svg width="20" height="20"><path class="s-white" d="M.500 0v3.500h12V0M.500 5.500h12v9H.500zM.500 20v-3.500h12V20M18.500 0v5M18.500 10v10"/><path class="f-white" d="M17 6h3v3h-3z"/></svg></button>
            <button class="app" aria-label="Chrome"><svg width="32" height="32"><circle cx="15" cy="15" r="15" fill="#2f9e4f"/><path fill="#e23b2e" d="M2 8a15 15 0 0 1 26 0H15l-6 11z"/><path fill="#fbc02d" d="M28 8a15 15 0 0 1-13 22l7-12-4-10z"/><circle cx="15" cy="15" r="7" fill="#fff"/><circle cx="15" cy="15" r="5" fill="#2b74e2"/><circle cx="22" cy="22" r="10" fill="#7fb9cf"/><path fill="#4d6478" d="M18 32V18q4-7 8 0v14z"/><path fill="#b9aef0" d="M27 16q6 6 1 14z"/></svg></button>
            <button class="app" aria-label="File Explorer"><svg width="28" height="26"><path fill="#e09a00" d="M0 2h11l3 3h14v8H0z"/><path fill="#ffd768" d="M0 6h28v19H0z"/><path fill="#3a93dc" d="M5 25V16q0-2 2-2h14q2 0 2 2v9h-5v-6h-8v6z"/></svg></button>
            <button class="app current" aria-label="AutoCAD"><svg width="28" height="30"><path fill="#e8114f" d="M3 0h23v22H3z"/><path fill="#f0658f" d="M0 4l4-4v21l-4 8z"/><path fill="#7b0a2e" d="M3 21h25v9H3zM26 3l2 2v20h-2z"/><text class="logo-a small" x="15" y="17">A</text><text class="logo-cad" x="15" y="28">CAD</text></svg></button>
            <button class="app" aria-label="Capture"><svg width="26" height="30"><circle cx="6" cy="7" r="6" fill="#e8e4da"/><circle cx="20" cy="7" r="6" fill="#e8e4da"/><ellipse cx="13" cy="7" rx="9" ry="7" fill="#fff"/><circle cx="10" cy="5" r="2" fill="#222"/><circle cx="17" cy="5" r="2" fill="#222"/><path fill="#f5b81e" d="M1 29q0-5 6-5h12q6 0 6 5z"/><circle cx="3" cy="17" r="3" fill="#eadfc5"/><circle cx="23" cy="17" r="3" fill="#eadfc5"/><circle cx="13" cy="17" r="11" fill="#0b78e3"/><path fill="none" stroke="#fff" stroke-width="2" d="M9 10v11h11M6 13h11v11"/></svg></button>
        </div>
        <div class="tray">
            <button class="tip" aria-label="Tips"><svg width="30" height="28"><circle cx="13" cy="13" r="12" fill="#109be0" stroke="#fff" stroke-width="2"/><text class="tip-q" x="13" y="20">?</text><circle cx="23" cy="20" r="6" fill="#f6a821"/><path class="f-white" d="M22 16h2v2h-2zM22 19h2v5h-2z"/></svg></button>
            <button class="news" aria-label="News"><svg width="30" height="20"><rect x="4" y="1" width="25" height="18" rx="2" fill="none" stroke="#fff" stroke-width="2"/><path fill="none" stroke="#fff" stroke-width="2" d="M4 4H1v12q0 3 3 3M8 6h17M8 10h6v5H8zM17 11h8M17 15h8"/></svg></button>
            <button aria-label="Hidden icons"><svg width="16" height="10"><path class="s-white" d="M1 9l7-7 7 7"/></svg></button>
            <button aria-label="Battery"><svg width="22" height="16"><path class="s-white" d="M3 1v3M7 1v3M1.500 4.500h6v3h-6zM4.500 8v3"/><path class="f-white" d="M8 5h11v9H5v-4h3z"/><path class="s-white" d="M9 3.500h10.500v11h-15"/></svg></button>
            <button aria-label="Wi-Fi"><svg width="16" height="18"><path class="s" d="M1 17Q1 2 15 1M5 17Q5 6 15 5M9 17q0-7 6-8"/><circle class="f-white" cx="14" cy="15" r="2"/></svg></button>
            <button aria-label="Volume"><svg width="20" height="16"><path class="s-white" d="M1 5.500h3l4-4v13l-4-4H1zM11 5q2 3 0 6"/><path fill="none" stroke="#999" d="M14 3q3 5 0 10M17 1q4 7 0 14"/></svg></button>
            <button class="ime">A</button>
            <button class="hangul"><span>한</span></button>
            <button class="clock"><span>오후 9:38</span><span>2023-10-25</span></button>
            <button class="notify" aria-label="Notifications"><svg width="30" height="32"><path class="f-white" d="M0 2h20v17H9l-4 5v-5H0z"/><path stroke="#444" d="M4 6.500h12M4 10.500h12M4 14.500h8"/><circle cx="19" cy="21" r="10" fill="#333" stroke="#aaa"/><text class="count" x="19" y="26">1</text></svg></button>
        </div>
    </footer>
</body>
</html>
```

FILE: styles.css
```css
* {
    box-sizing: border-box;
}
body {
    margin: 0;
    height: 100vh;
    display: flex;
    flex-direction: column;
    overflow: hidden;
    background-color: #222933;
    color: #f0f0f0;
    font-family: "Open Sans", "Noto Sans CJK KR", sans-serif;
    font-size: 14px;
    line-height: 20px;
}
button {
    display: flex;
    align-items: center;
    justify-content: center;
    padding: 0;
    border: none;
    background: none;
    color: inherit;
    font: inherit;
    cursor: pointer;
}
a {
    color: inherit;
    text-decoration: none;
}
svg {
    display: block;
    flex: none;
    overflow: visible;
}
.defs {
    position: absolute;
    width: 0;
    height: 0;
}
.ico {
    width: 20px;
    height: 20px;
}
.bico {
    width: 40px;
    height: 40px;
}

/* icon paint */
.f { fill: #dcdcdc; }
.f-white { fill: #fff; }
.f-blue { fill: #79c3fb; }
.f-yellow { fill: #ffd479; }
.f-red { fill: #f2696b; }
.f-cyan { fill: #74dce4; }
.f-green { fill: #6fd08c; stroke: #2f5a45; }
.dark { fill: #3a4048; }
.s { fill: none; stroke: #dcdcdc; }
.s-white { fill: none; stroke: #fff; }
.s-blue { fill: none; stroke: #6fbcf5; }
.s-yellow { fill: none; stroke: #ffd479; }
.s-cyan { fill: none; stroke: #74dce4; }
.s-green { fill: none; stroke: #55c47a; }
.s-shade { fill: #6b7280; fill-opacity: .7; stroke: #c4c8ce; }
.s-shadeblue { fill: #4a6d90; stroke: #6fbcf5; }
.thick { stroke-width: 2; }
.fat { stroke-width: 3; }

.caret {
    flex: none;
    width: 0;
    height: 0;
    border: 3px solid transparent;
    border-top: 4px solid #dcdcdc;
    border-bottom: none;
}
.caret.wide {
    border-width: 5px 5px 0;
}
.caret.right {
    border: 5px solid transparent;
    border-left-color: #dcdcdc;
    border-right: none;
}
.caret.dim {
    border-top-color: #8a8e96;
}
.caret.grey {
    border-top-color: #666;
}
.slash {
    flex: none;
    width: 1px;
    height: 20px;
    background-color: #59616e;
    transform: rotate(22deg);
}

/* title bar */
.titlebar {
    display: flex;
    align-items: center;
    height: 37px;
    padding-bottom: 3px;
}
.quick {
    display: flex;
    align-items: center;
    padding-left: 19px;
}
.logo {
    margin-right: 3px;
}
.logo-a {
    fill: #fff;
    font-size: 17px;
    font-weight: bold;
    text-anchor: middle;
}
.logo-a.small {
    font-size: 16px;
}
.logo-cad {
    fill: #fff;
    font-size: 7px;
    font-weight: bold;
    text-anchor: middle;
}
.qbtn {
    width: 30px;
    height: 28px;
}
.qbtn.first {
    margin-left: 8px;
}
.quick > .caret:not(.wide) {
    margin: 0 4px;
}
.qbtn.narrow {
    width: 20px;
}
.share {
    gap: 6px;
    margin-left: 3px;
    color: #93cdf8;
}
.doc-title {
    flex: 1;
    display: flex;
    padding-left: 126px;
    gap: 18px;
    white-space: nowrap;
}
.account {
    display: flex;
    align-items: center;
}
.search {
    width: 223px;
    height: 26px;
    margin: 2px 0 0 6px;
    padding: 0 4px;
    border: none;
    background-color: #454f61;
    color: #fff;
    font: italic 14px "Open Sans", sans-serif;
}
.search::placeholder {
    color: #b4b9c2;
}
.abtn {
    width: 29px;
}
.user {
    width: 154px;
    padding: 0 7px;
    gap: 8px;
}
.user .caret {
    margin-left: auto;
}
.account > .caret:not(.right) {
    margin: 0 4px;
}
.vsep {
    width: 1px;
    height: 22px;
    margin: 0 7px;
    background-color: #59616e;
}
.help-q {
    fill: #333;
    font-size: 15px;
    text-anchor: middle;
}
.winbtns {
    display: flex;
    margin-left: 79px;
}
.winbtns button {
    width: 58px;
    height: 30px;
}

/* ribbon tabs */
.menu {
    display: flex;
    align-items: flex-end;
    gap: 1px;
    padding-left: 4px;
    height: 28px;
    color: #b9bdc4;
}
.menu a {
    height: 25px;
    padding: 2px 12px 0;
    line-height: 22px;
}
.menu .active {
    background-color: #3b4453;
    color: #fff;
}
.collapse {
    gap: 5px;
    height: 24px;
    margin-left: 23px;
}

/* ribbon */
.ribbon {
    display: flex;
    height: 124px;
    background-color: #3b4453;
    border-left: 1px solid #222933;
}
.panel {
    flex: none;
    display: flex;
    flex-direction: column;
    border-right: 1px solid #222933;
}
.tools {
    flex: 1;
    display: flex;
    padding-top: 5px;
}
.panel-title {
    align-self: center;
    display: flex;
    align-items: center;
    gap: 8px;
    height: 22px;
    color: #f0f0f0;
}
.title-row {
    display: flex;
    align-items: center;
}
.title-row .panel-title {
    flex: 1;
}
.launcher {
    margin-right: 5px;
}
.draw { width: 279px; }
.modify { width: 315px; }
.annotation { width: 184px; }
.layers { width: 341px; }
.block { width: 100px; }
.properties { width: 277px; }
.groups { width: 85px; }
.utilities { width: 121px; }
.clipboard { width: 113px; }
.view { flex: 1; }

.big {
    display: flex;
    flex-direction: column;
    justify-content: flex-start;
    min-width: 54px;
    padding-top: 3px;
    align-items: center;
}
.big .bico {
    margin-bottom: 5px;
}
.big .caret {
    margin-top: 4px;
}
.rows {
    display: flex;
    flex-direction: column;
}
.rows button {
    height: 31px;
    gap: 7px;
    justify-content: flex-start;
}
.draw .big:nth-child(3) {
    min-width: 64px;
}
.draw .rows {
    margin-left: 2px;
}
.draw .rows button,
.annotation .rows button {
    gap: 11px;
}
.modify .tools {
    padding-left: 6px;
}
.modify .rows {
    width: 91px;
}
.modify .mid {
    width: 88px;
}
.modify .spread {
    width: 96px;
}
.modify .rows:last-child {
    width: auto;
}
.spread .caret {
    margin-left: 8px;
}
.annotation .big {
    min-width: 60px;
}
.annotation .big:nth-child(2) {
    min-width: 72px;
}
.annotation .rows {
    margin-left: 7px;
}
.layers .big {
    width: 78px;
}
.combo {
    display: flex;
    align-items: center;
    gap: 6px;
    height: 28px;
    margin-bottom: 3px;
    padding: 0 1px 0 8px;
    border: 1px solid #272e39;
    background-color: #4d5a6d;
}
.combo select {
    flex: 1;
    min-width: 0;
    height: 24px;
    padding: 0;
    border: none;
    appearance: none;
    background: none;
    color: #f0f0f0;
    font: inherit;
}
.swatch {
    width: 17px;
    height: 18px;
    background-color: #fff;
}
.swatch.large {
    width: 20px;
    height: 20px;
}
.rule {
    width: 80px;
    height: 1px;
    background-color: #fff;
}
.rule + select {
    margin-left: -4px;
}
.combo.wide {
    width: 260px;
    padding-left: 7px;
}
.stack,
.combos {
    padding-top: 1px;
}
.combos {
    width: 171px;
}
.icons {
    display: flex;
    gap: 10px;
    height: 31px;
    padding-left: 3px;
    align-items: center;
}
.block .big {
    width: 54px;
    padding-top: 1px;
}
.block .rows {
    margin-left: 1px;
}
.block .rows .caret {
    margin-left: 4px;
}
.properties .big {
    width: 78px;
}
.rows.plain {
    margin: 0 3px 0 1px;
}
.groups .big {
    width: 51px;
    min-width: 0;
}
.groups .rows button {
    width: 29px;
    justify-content: center;
}
.rows .on {
    border: 1px solid #6fbcf5;
    background-color: #4a6078;
    height: 27px;
    margin-top: 2px;
}
.utilities .big {
    width: 88px;
}
.utilities .rows {
    margin-left: 3px;
}
.clipboard .big {
    width: 66px;
}
.clipboard .rows {
    margin-left: 3px;
}
.view .big {
    width: 78px;
}
.view .panel-title {
    flex: none;
    margin: 0 15px 0 6px;
}

/* tabs with slanted sides */
.filetabs,
.layouts {
    display: flex;
    align-items: center;
}
.filetabs {
    height: 33px;
    padding-top: 3px;
}
.burger {
    width: 20px;
    margin-left: 20px;
}
.filetabs .slash {
    margin: 0 16px 0 15px;
}
.filetabs .tab {
    gap: 13px;
}
.tab {
    display: flex;
    align-items: center;
    height: 30px;
    background-color: #3b4453;
    clip-path: polygon(12px 0, 100% 0, calc(100% - 12px) 100%, 0 100%);
    color: #fff;
    font-weight: bold;
}
.filetabs .tab {
    margin-left: 8px;
    padding: 0 15px 0 22px;
}
.plus {
    margin-left: 13px;
}

/* workspace */
.workspace {
    flex: 1;
    display: flex;
    min-height: 0;
    border-top: 5px solid #3b4453;
    border-bottom: 5px solid #3b4453;
}
.palette {
    width: 31px;
    padding: 4px 3px 3px 1px;
    border-top: 3px solid #3b4453;
    border-bottom: 3px solid #3b4453;
}
.palette-bar {
    display: flex;
    flex-direction: column;
    align-items: center;
    height: 100%;
    padding-bottom: 15px;
    background-color: #3b4453;
}
.palette span {
    margin: auto 0;
    writing-mode: vertical-rl;
    transform: rotate(180deg);
}
.grip {
    align-self: flex-start;
    width: 9px;
    height: 4px;
    margin: 3px 0 0 7px;
    background: repeating-linear-gradient(90deg, #c8ccd2 0 1px, transparent 1px 2px);
}
.canvas {
    position: relative;
    flex: 1;
    background-color: #212830;
}
.model {
    width: 100%;
    height: 100%;
    overflow: hidden;
}
.grid {
    stroke: #252c38;
    stroke-width: 2;
}
.grid.major {
    stroke: #2b3342;
}
.plan {
    fill: none;
    stroke: #e6e6e6;
}
.plan .solid {
    fill: #fff;
}
.plan .center {
    stroke: #e01217;
}
.dim {
    fill: #fff;
    font: 12px "Liberation Sans", sans-serif;
    text-anchor: middle;
}
.vp-label {
    position: absolute;
    top: 6px;
    left: 3px;
    display: flex;
    gap: 1px;
    font-size: 14px;
}
.sheet {
    position: absolute;
    top: 13px;
    left: 79px;
}
.part {
    fill: none;
    stroke: #000;
    stroke-width: 2;
}
.part .heavy {
    stroke-width: 4;
}
.lead {
    fill: none;
    stroke: #999;
}
.note {
    fill: #8a8a8a;
    font: 200 26px "DejaVu Sans", sans-serif;
}
.mdi {
    position: absolute;
    top: 9px;
    right: 12px;
    display: flex;
    gap: 11px;
}
.viewcube {
    position: absolute;
    top: 46px;
    right: 17px;
    display: flex;
    flex-direction: column;
    align-items: center;
    gap: 21px;
}
.viewcube text {
    fill: #abacac;
    font: bold 23px "Liberation Sans", sans-serif;
    text-anchor: middle;
}
.viewcube .face {
    fill: #4a5560;
    font-size: 13px;
}
.wcs {
    gap: 6px;
    width: 57px;
    height: 20px;
    border-radius: 5px;
    background-color: #9a9ca9;
    color: #5e6470;
    font-family: "Liberation Sans", sans-serif;
    font-size: 13px;
}
.navbar {
    position: absolute;
    top: 262px;
    right: 3px;
    display: flex;
    flex-direction: column;
    align-items: center;
    width: 41px;
    height: 260px;
    border: 1px solid #6a7074;
    border-radius: 3px;
    background-color: #565c60;
}
.navbar .n {
    fill: #5a606b;
    stroke: #424853;
}
.navbar .caret {
    margin: 9px 0 5px;
    border-top-color: #3b4149;
}
.navbar hr {
    width: 34px;
    margin: 1px 0 3px;
    border: none;
    border-top: 1px solid #636a6e;
}
.navbar .tiny {
    align-self: flex-end;
    margin: 1px 2px 10px;
}
.navbar .end {
    margin: auto 2px 1px;
}
.navbar button + button:not(.tiny) {
    margin-top: 5px;
}
.navbar .tiny + button:not(.tiny) {
    margin-top: 0;
}
.ucs {
    position: absolute;
    left: 12px;
    bottom: 11px;
    fill: none;
    stroke: #e6e6e6;
}
.ucs text {
    fill: #e6e6e6;
    stroke: none;
    font: 200 22px "DejaVu Sans", sans-serif;
}
.watermark {
    position: absolute;
    right: 88px;
    bottom: 7px;
    display: flex;
    flex-direction: column;
    color: #80858a;
    font-size: 17px;
    line-height: 24px;
}
.watermark strong {
    font-size: 24px;
    font-weight: normal;
    line-height: 36px;
}

/* command line */
.command {
    position: absolute;
    left: 396px;
    right: 397px;
    bottom: 0;
    font-family: "Liberation Mono", monospace;
    font-size: 15px;
}
.history {
    display: flex;
    flex-direction: column;
    align-items: flex-start;
    gap: 6px;
    margin: 0 0 4px 79px;
    padding: 0;
    list-style: none;
}
.history li {
    height: 19px;
    padding: 0 2px;
    border-radius: 2px;
    background-color: #606162;
    line-height: 20px;
    white-space: nowrap;
}
.history li:nth-child(1) {
    background-color: #4a4d50;
    color: #a8abae;
}
.history li:nth-child(2) {
    background-color: #535659;
    color: #d5d6d8;
}
.cmdline {
    display: flex;
    height: 33px;
}
.handle {
    display: flex;
    align-items: center;
    gap: 13px;
    width: 72px;
    padding: 0 5px;
    background-color: #2b323e;
}
.dots {
    width: 6px;
    height: 22px;
    background-image: radial-gradient(circle at 1px 1px, #dcdcdc 1px, transparent 1px);
    background-size: 4px 4px;
}
.prompt {
    flex: 1;
    display: flex;
    align-items: center;
    height: 32px;
    margin-top: 1px;
    padding: 1px 6px 0 5px;
    border-radius: 2px;
    background-color: #fff;
    color: #000;
}
.prompt .caret {
    margin: 0 7px 0 2px;
}
.prompt label {
    padding-top: 2px;
    white-space: nowrap;
}
.prompt b {
    margin-right: 6px;
}
.opt {
    display: inline-block;
    height: 22px;
    margin-right: 4px;
    padding: 0 2px;
    border-radius: 4px;
    background-color: #d0d0d0;
}
.opt + .opt {
    margin-right: 0;
}
.opt em {
    color: #00f;
    font-style: normal;
}
#cmd {
    flex: 1;
    min-width: 0;
    border: none;
    outline: none;
    font: inherit;
}

/* status bar */
.statusbar {
    display: flex;
    justify-content: space-between;
    height: 36px;
    padding-right: 2px;
}
.layouts {
    height: 30px;
}
.layouts .tab {
    margin: 0 9px 0 11px;
    padding: 0 21px;
}
.layouts .slash {
    margin: 0 15px;
}
.layouts .plus {
    margin-left: 1px;
}
.toggles {
    display: flex;
    gap: 3px;
    height: 30px;
    margin-top: 2px;
}
.toggles div {
    display: flex;
    background-color: #3b4453;
}
.toggles button {
    width: 30px;
}
.toggles .on {
    border: 1px solid #7aa3d0;
    background-color: #5f8fc4;
}
.toggles .model-btn {
    width: 59px;
}
.toggles .drop {
    width: 19px;
}
.toggles .scale {
    width: 42px;
    gap: 5px;
}
.toggles .perf {
    width: 34px;
}

/* windows taskbar */
.taskbar {
    display: flex;
    justify-content: space-between;
    height: 50px;
    background-color: #454545;
}
.apps,
.tray {
    display: flex;
}
.apps button {
    width: 60px;
}
.apps .app {
    width: 52px;
    margin: 0 5px;
    border-bottom: 3px solid #7fd6d6;
    border-top: 3px solid transparent;
}
.apps button:nth-child(4) {
    margin-left: 9px;
}
.apps .current {
    width: 61px;
    margin: 0;
    border-top-color: #6b6b6b;
    background-color: #6b6b6b;
}
.tray {
    padding-right: 5px;
}
.tray button {
    width: 30px;
}
.tip-q {
    fill: #fff;
    font-size: 19px;
    font-weight: bold;
    text-anchor: middle;
}
.tray .tip {
    margin-right: 208px;
}
.tray .news {
    margin-right: 25px;
}
.tray .ime {
    font-size: 22px;
}
.tray .hangul {
    width: 42px;
}
.hangul span {
    width: 20px;
    height: 20px;
    background-color: #fff;
    color: #000;
    font-weight: bold;
}
.tray .clock {
    flex-direction: column;
    width: 98px;
    line-height: 24px;
}
.tray .notify {
    width: 56px;
    padding-right: 4px;
    border-right: 1px solid #8a8a8a;
}
.count {
    fill: #fff;
    font-size: 14px;
    text-anchor: middle;
}
```
